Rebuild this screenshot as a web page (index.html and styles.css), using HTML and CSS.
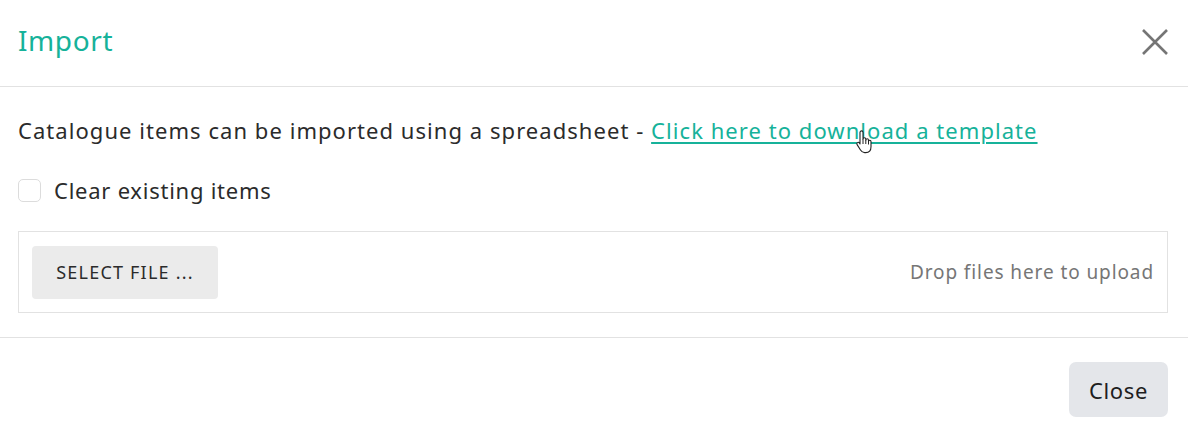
FILE: index.html
```html
<!DOCTYPE html>
<html lang="en">
<head>
	<meta charset="UTF-8">
	<title>Import</title>
	<link rel="stylesheet" href="styles.css">
</head>
<body>

<div class="dialog">
	<div class="dialogHeader">
		<h1 class="dialogTitle">Import</h1>
		<button class="closeX" aria-label="Close">
			<svg width="26" height="26" viewBox="0 0 26 26"><path d="M1 1L25 25M25 1L1 25" stroke="#757575" stroke-width="2.6" fill="none"/></svg>
		</button>
	</div>

	<div class="dialogBody">
		<p class="intro">Catalogue items can be imported using a spreadsheet - <a href="#" class="link">Click here to download a template</a><span class="cursor"><svg width="18" height="24" viewBox="0 0 18 24"><path d="M5 2.5c0-1 .7-1.6 1.5-1.6S8 1.5 8 2.5V9c.2-.9.8-1.3 1.5-1.3s1.3.5 1.3 1.4V10c.2-.8.8-1.2 1.4-1.2.7 0 1.3.5 1.3 1.4v1c.2-.7.7-1 1.3-1 .7 0 1.2.5 1.2 1.4v5.2c0 3.4-2 5.8-5.3 5.8H9.6c-2 0-3.1-1-4.1-2.6L2.1 14.6c-.5-.8-.3-1.6.3-2 .7-.5 1.5-.3 2.1.5L5 14z" fill="#fff" stroke="#222" stroke-width="1.1" stroke-linejoin="round"/><path d="M8 9v5M10.8 10v4M13.5 11v3.5" stroke="#222" stroke-width="1" fill="none"/></svg></span></p>

		<label class="check">
			<span class="checkBox"></span>
			<span>Clear existing items</span>
		</label>

		<div class="upload">
			<button class="selectFile">SELECT FILE ...</button>
			<span class="dropHint">Drop files here to upload</span>
		</div>
	</div>

	<div class="dialogFooter">
		<button class="closeButton">Close</button>
	</div>
</div>

</body>
</html>
```

FILE: styles.css
```css
body {
	margin: 0;
	font-family: "Noto Sans", sans-serif;
	color: #2b2b2b;
	background: #fff;
}

.dialog {
	width: 1188px;
}

.dialogHeader {
	display: flex;
	align-items: center;
	justify-content: space-between;
	height: 80px;
	padding: 0 20px 6px 18px;
	border-bottom: 1px solid #e2e2e2;
}

.dialogTitle {
	margin: 0;
	font-size: 28px;
	font-weight: 400;
	letter-spacing: 0.6px;
	color: #16b29a;
}

.closeX {
	border: 0;
	background: none;
	padding: 0;
	width: 26px;
	height: 26px;
	margin-top: 4px;
}

.dialogBody {
	padding: 0 20px 24px 18px;
	border-bottom: 1px solid #e2e2e2;
}

.intro {
	margin: 0;
	padding-top: 28px;
	height: 57px;
	line-height: 30px;
	font-size: 22px;
	letter-spacing: 1.05px;
	white-space: nowrap;
	position: relative;
}

.link {
	color: #16b29a;
	text-decoration-thickness: 1.5px;
	text-underline-offset: 3px;
}

.cursor {
	position: absolute;
	left: 837px;
	top: 43px;
}

.check {
	display: flex;
	align-items: center;
	gap: 13px;
	height: 28px;
	font-size: 22px;
	letter-spacing: 0.75px;
	margin-top: 4px;
}

.checkBox {
	width: 21px;
	height: 21px;
	border: 1px solid #dcdcdc;
	border-radius: 5px;
}

.upload {
	display: flex;
	align-items: center;
	justify-content: space-between;
	margin-top: 27px;
	height: 80px;
	padding: 0 13px 0 13px;
	border: 1px solid #e2e2e2;
}

.selectFile {
	width: 186px;
	height: 53px;
	padding: 0;
	border: 0;
	border-radius: 4px;
	background: #ebebeb;
	font-family: "Noto Sans", sans-serif;
	font-size: 18px;
	letter-spacing: 1.2px;
	color: #2b2b2b;
}

.dropHint {
	font-size: 19px;
	letter-spacing: 0.9px;
	color: #767676;
}

.dialogFooter {
	display: flex;
	justify-content: flex-end;
	padding: 24px 20px 0 18px;
}

.closeButton {
	width: 99px;
	height: 55px;
	border: 0;
	border-radius: 7px;
	background: #e4e6ea;
	font-family: "Noto Sans", sans-serif;
	font-size: 22px;
	letter-spacing: 0.6px;
	color: #1e1e1e;
}
```
